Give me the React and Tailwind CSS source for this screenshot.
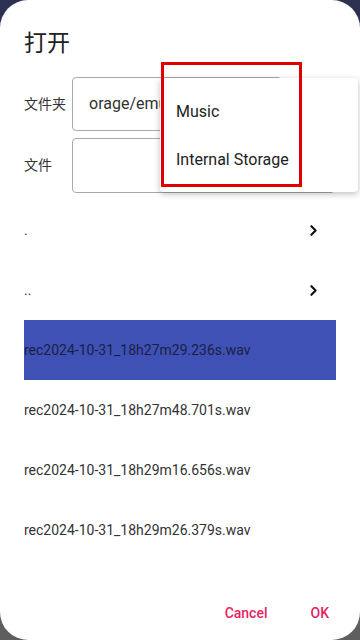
import { ChevronRight } from 'lucide-react'

const files = [
  { name: '.', dir: true },
  { name: '..', dir: true },
  { name: 'rec2024-10-31_18h27m29.236s.wav', selected: true },
  { name: 'rec2024-10-31_18h27m48.701s.wav' },
  { name: 'rec2024-10-31_18h29m16.656s.wav' },
  { name: 'rec2024-10-31_18h29m26.379s.wav' },
]

export default function App() {
  return (
    <div
      className="relative w-[360px] h-[640px] overflow-hidden bg-[linear-gradient(#2c3152_50%,#5e5e5e_50%)]"
      style={{ fontFamily: 'Roboto, "Noto Sans CJK SC", sans-serif' }}
    >
      <div className="flex h-full flex-col rounded-[28px] bg-white">
        {/* title */}
        <h1 className="px-6 pt-[28px] text-[23px] leading-[32px] text-[#222]">打开</h1>

        {/* folder / file inputs */}
        <div className="mt-[17px] flex items-center px-6">
          <span className="w-12 text-[14px] text-[#333]">文件夹</span>
          <div className="flex h-[54px] w-[210px] items-center rounded border border-[#a9a9a9] px-4 text-base text-[#333]">
            <span className="w-[72px] overflow-hidden whitespace-nowrap">orage/emulated/0/Music</span>
          </div>
        </div>
        <div className="mt-[7px] flex items-center px-6">
          <span className="w-12 text-[14px] text-[#333]">文件</span>
          <div className="h-[55px] w-[263px] rounded border border-[#a9a9a9]" />
        </div>

        {/* list */}
        <div className="mt-[7px] flex flex-col px-6">
          {files.map((f) => (
            <div
              key={f.name}
              className={`flex h-[60px] items-center justify-between text-[14px] ${
                f.selected ? 'bg-[#3f51b5] text-[#1b1f45]' : 'text-[#333]'
              }`}
            >
              <span>{f.name}</span>
              {f.dir && <ChevronRight size={17} strokeWidth={3} className="mr-[14px] text-[#111]" />}
            </div>
          ))}
        </div>

        {/* actions */}
        <div className="mt-auto mb-[16px] flex justify-end gap-[43px] pr-[31px] text-[14px] font-medium text-[#e91e63]">
          <span>Cancel</span>
          <span>OK</span>
        </div>
      </div>

      {/* dropdown popup */}
      <div className="absolute left-[160px] top-[78px] flex h-[114px] w-[198px] flex-col rounded bg-white pt-[10px] shadow-[0_2px_6px_rgba(0,0,0,0.25)]">
        <div className="flex h-12 items-center pl-4 text-[16px] text-[#222]">Music</div>
        <div className="flex h-12 items-center pl-4 text-[16px] text-[#222]">Internal Storage</div>
      </div>

      {/* annotation box */}
      <div className="absolute left-[161px] top-[62px] h-[125px] w-[141px] border-[3px] border-[#e00000]" />
    </div>
  )
}
